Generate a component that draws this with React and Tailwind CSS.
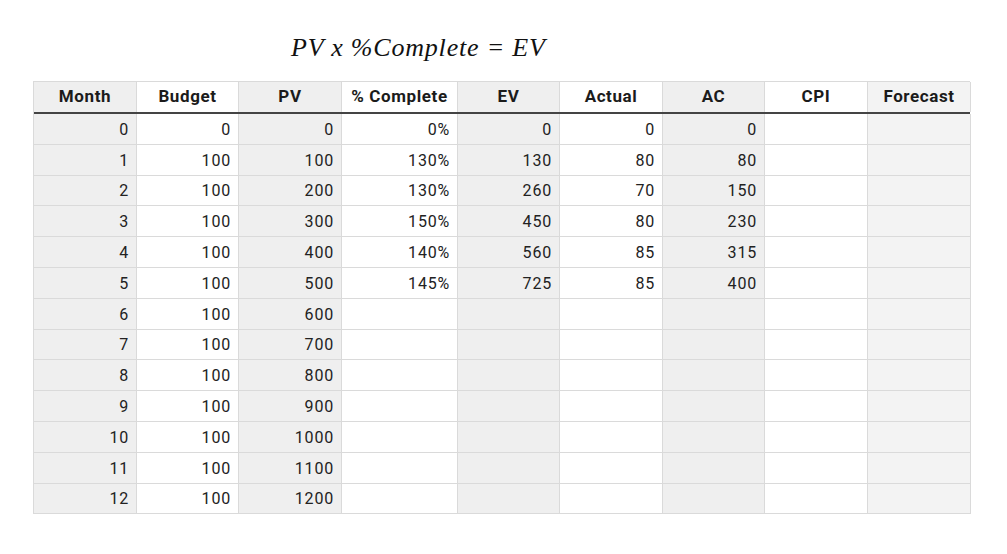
import React from "react";

// column widths add up to 937px, the whole table
const columns = [
  { key: "month", label: "Month", w: "w-[103px]", shade: "bg-[#efefef]" },
  { key: "budget", label: "Budget", w: "w-[102px]", shade: "bg-white" },
  { key: "pv", label: "PV", w: "w-[103px]", shade: "bg-[#efefef]" },
  { key: "pct", label: "% Complete", w: "w-[116px]", shade: "bg-white" },
  { key: "ev", label: "EV", w: "w-[102px]", shade: "bg-[#efefef]" },
  { key: "actual", label: "Actual", w: "w-[103px]", shade: "bg-white" },
  { key: "ac", label: "AC", w: "w-[102px]", shade: "bg-[#efefef]" },
  { key: "cpi", label: "CPI", w: "w-[103px]", shade: "bg-white" },
  { key: "forecast", label: "Forecast", w: "w-[103px]", shade: "bg-[#f3f3f3]" },
];

const pctDone = [0, 130, 130, 150, 140, 145];
const actual = [0, 80, 70, 80, 85, 85];

const rows = Array.from({ length: 13 }, (_, m) => {
  const pv = m * 100;
  const hasData = m < pctDone.length;
  const ac = actual.slice(0, m + 1).reduce((a, b) => a + b, 0);
  return {
    month: m,
    budget: m === 0 ? 0 : 100,
    pv,
    pct: hasData ? `${pctDone[m]}%` : "",
    ev: hasData ? (pv * pctDone[m]) / 100 : "",
    actual: hasData ? actual[m] : "",
    ac: hasData ? ac : "",
    cpi: "",
    forecast: "",
  };
});

export default function App() {
  return (
    <div
      className="w-[1007px] h-[554px] bg-white text-[#222] overflow-hidden"
      style={{ fontFamily: "Roboto, 'Liberation Sans', sans-serif" }}
    >
      <div className="pt-[34px] pl-[291px]">
        <div
          className="h-[29px] leading-[28px] text-[26px] italic tracking-[0.8px] text-[#111]"
          style={{ fontFamily: "'Liberation Serif', 'Times New Roman', serif" }}
        >
          PV x %Complete = EV
        </div>
      </div>

      <div className="mt-[18px] ml-[33px] w-[937px] border-t border-l border-[#dadada]">
        {/* header */}
        <div className="flex h-[32px] border-b-2 border-[#444]">
          {columns.map((c) => (
            <div
              key={c.key}
              className={`${c.w} ${c.shade} shrink-0 border-r border-[#dadada] flex items-center justify-center text-[17px] font-bold tracking-[0.6px] text-[#1b1b1b]`}
            >
              {c.label}
            </div>
          ))}
        </div>

        {/* body */}
        {rows.map((r) => (
          <div key={r.month} className="flex h-[30.8px]">
            {columns.map((c) => (
              <div
                key={c.key}
                className={`${c.w} ${c.shade} shrink-0 border-r border-b border-[#dadada] flex items-center justify-end pt-[2px] pr-[7px] text-[16px] tracking-[0.8px]`}
              >
                {r[c.key]}
              </div>
            ))}
          </div>
        ))}
      </div>
    </div>
  );
}
